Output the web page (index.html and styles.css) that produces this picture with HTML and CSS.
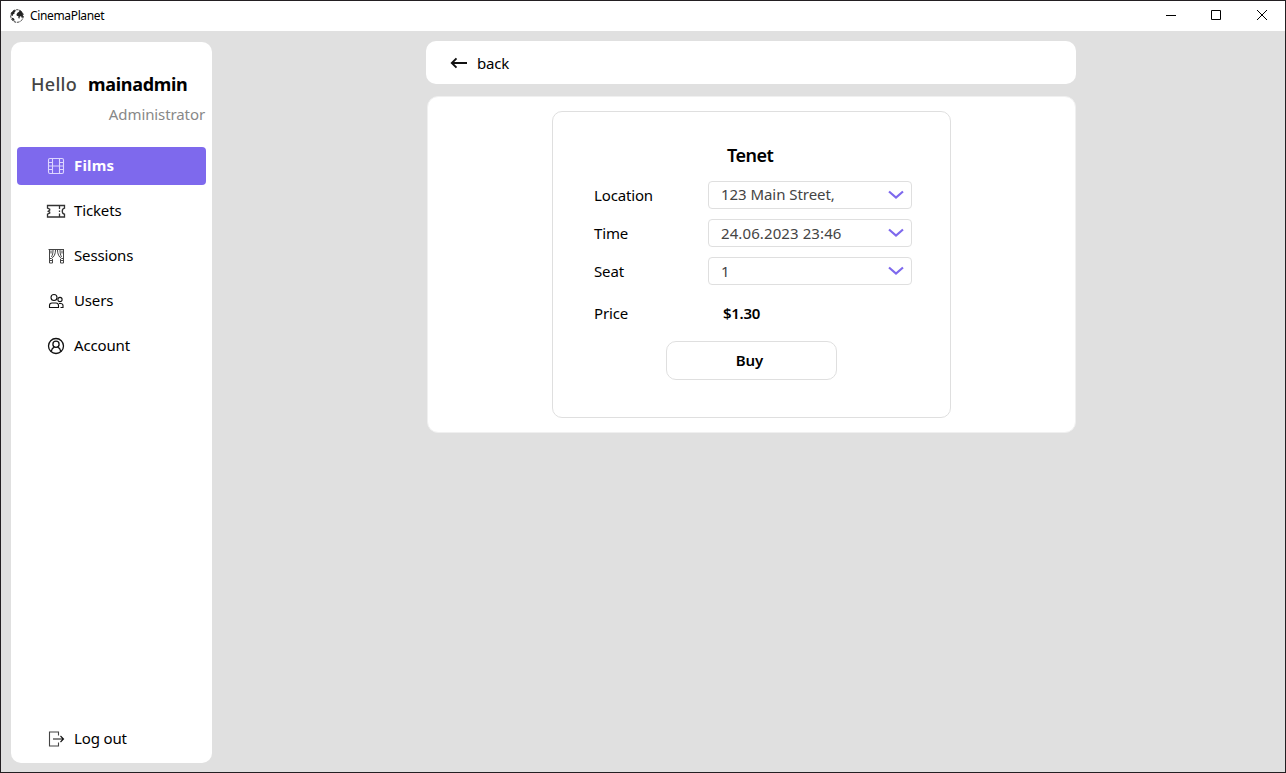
FILE: index.html
```html
<!DOCTYPE html>
<html lang="en">
<head>
<meta charset="utf-8">
<title>CinemaPlanet</title>
<link rel="stylesheet" href="styles.css">
</head>
<body>
<div class="window">
  <header class="titlebar">
    <svg class="logo" width="14" height="14" viewBox="0 0 14 14"><circle cx="7" cy="7" r="6.300" fill="#fff" stroke="#333" stroke-width="1" stroke-dasharray="2.500 1"/><path fill="#222" d="M1.200 4 3 1.800 5.500 1 5.800 2 4.500 3.200 4.600 4.500 3 5.400 2.700 7 1.200 6.500zM7.500 3.800 9.300 2.600 9 1.300 11.200 2 12.800 4.500 13 7.500 12 9.500 11.300 7.500 10 7.300 9.300 9.800 8.300 9 8.500 7.200 6.800 6.800 6.500 5.300zM1.500 8.500 3.700 9.200 4.500 10.500 4.200 12 2.500 11z"/></svg>
    <span class="app-name">CinemaPlanet</span>
    <svg class="controls" width="104" height="14" viewBox="0 0 104 14" fill="none" stroke="#000"><path d="M1 7.500h10M46.500 2.500h9v9h-9zM92 2l10 10M102 2 92 12"/></svg>
  </header>
  <div class="body">
    <aside class="sidebar">
      <div class="greeting"><span class="hello">Hello</span><strong class="username">mainadmin</strong></div>
      <div class="role">Administrator</div>
      <nav class="menu">
        <a class="item active"><svg class="icon" viewBox="0 0 20 20"><rect x="2.500" y="2.500" width="15" height="15" rx="1.500"/><path d="M6.500 2.500v15M13.500 2.500v15M6.500 10h7M2.500 6.500h4M2.500 10h4M2.500 13.500h4M13.500 6.500h4M13.500 10h4M13.500 13.500h4"/></svg><span class="label">Films</span></a>
        <a class="item"><svg class="icon" viewBox="0 0 20 20"><path stroke="#333" stroke-width="1.300" d="M1.500 4.500h17v2.700c-3 .8-3 5.300 0 6v2.800h-17v-2.800l2.200-1v-1l-1.500-1 1.500-1v-1l-2.200-1zM13.500 5v3M13.500 9.500v1.500M13.500 12.500v3"/></svg><span class="label">Tickets</span></a>
        <a class="item"><svg class="icon" viewBox="0 0 20 20"><path stroke="#444" stroke-width="1" d="M2.500 3.500h15M3.500 3v14h3v-4M17.500 3v14h-3v-4M9.500 4c0 4-1.500 7-4 8.500h-2M11.500 4c0 4 1.500 7 4 8.500h2M7 4c0 3-.5 5-1.500 7M14 4c0 3 .5 5 1.500 7M3.500 14.500h3M14.500 14.500h3M5 4.500v3M16 4.500v3"/></svg><span class="label">Sessions</span></a>
        <a class="item"><svg class="icon" viewBox="0 0 20 20"><circle cx="8" cy="6.500" r="3"/><circle cx="14" cy="8.500" r="2.100"/><path d="M3.500 16.500v-2q0-2.500 2.500-2.500h4q2.500 0 2.500 2.500v2zM13 12.500h1.500q2.500 0 2.500 2v2h-2.500"/></svg><span class="label">Users</span></a>
        <a class="item"><svg class="icon" viewBox="0 0 20 20"><g stroke-width="1.300"><circle cx="10" cy="10" r="7.500"/><circle cx="10" cy="8.300" r="3.100"/><path d="M5.200 15.300q.8-3.300 3.200-4.100M14.800 15.300q-.8-3.300-3.200-4.100"/></g></svg><span class="label">Account</span></a>
      </nav>
      <a class="item logout"><svg class="icon" viewBox="0 0 20 20"><path d="M12.500 6.500v-3.500h-9v14h9v-3.500" stroke="#444"/><path d="M7 10h10.500M14.500 7l3 3-3 3"/></svg><span class="label">Log out</span></a>
    </aside>
    <main class="content">
      <div class="back-bar">
        <svg width="18" height="14" viewBox="0 0 18 14" fill="none" stroke="#111" stroke-width="1.900"><path d="M17 7H2M6.500 2.300 1.800 7l4.700 4.700"/></svg>
        <span class="back">back</span>
      </div>
      <section class="panel">
        <div class="card">
          <h1 class="film-title">Tenet</h1>
          <div class="row"><label class="name">Location</label><div class="select"><span class="value location">123 Main Street,</span><svg class="chevron" viewBox="0 0 16 10"><path d="m1 1.500 7 6 7-6"/></svg></div></div>
          <div class="row"><label class="name">Time</label><div class="select"><span class="value time">24.06.2023 23:46</span><svg class="chevron" viewBox="0 0 16 10"><path d="m1 1.500 7 6 7-6"/></svg></div></div>
          <div class="row"><label class="name">Seat</label><div class="select"><span class="value">1</span><svg class="chevron" viewBox="0 0 16 10"><path d="m1 1.500 7 6 7-6"/></svg></div></div>
          <div class="row price-row"><span class="name">Price</span><strong class="price">$1.30</strong></div>
          <button class="buy">Buy</button>
        </div>
      </section>
    </main>
  </div>
</div>
</body>
</html>
```
FILE: styles.css
```css
* { box-sizing: border-box; }
body { margin: 0; font-family: "Noto Sans", "Open Sans", sans-serif; font-size: 15px; line-height: 20px; color: #000; }
span, label, strong { white-space: nowrap; }
.window { width: 1286px; height: 773px; border: 1px solid #231f22; background: #e0e0e0; display: flex; flex-direction: column; }
.titlebar { height: 30px; background: #fff; display: flex; align-items: center; padding: 0 16px 0 9px; }
.app-name { margin-left: 6px; font-size: 12px; letter-spacing: -0.35px; }
.controls { margin-left: auto; transform: translateY(-1px); }
.body { flex: 1; display: flex; padding: 11px 10px 9px; }
.sidebar { width: 201px; background: #fff; border-radius: 10px; padding: 28px 6px 5px; display: flex; flex-direction: column; }
.greeting { height: 28px; display: flex; align-items: center; padding-left: 14px; font-size: 18px; }
.hello { width: 57px; color: #444; letter-spacing: 0.3px; font-weight: 500; }
.username { font-weight: 700; letter-spacing: -0.3px; }
.role { height: 35px; padding: 6px 1px 0 0; text-align: right; color: #888; letter-spacing: -0.1px; }
.menu { margin-top: 14px; display: flex; flex-direction: column; gap: 7px; }
.item { height: 38px; display: flex; align-items: center; gap: 8px; padding-left: 29px; border-radius: 4px; }
.label { padding-bottom: 2px; letter-spacing: -0.15px; }
.active .label { letter-spacing: 0.15px; }
.icon { width: 20px; height: 20px; fill: none; stroke: #111; stroke-width: 1.1; }
.active { background: #7e69ed; color: #fff; font-weight: 700; }
.active .icon { stroke: #ddd6ff; stroke-width: 1.1; }
.logout { margin-top: auto; }
.content { width: 649px; margin-left: 215px; display: flex; flex-direction: column; gap: 12px; }
.back-bar { height: 43px; margin: -1px 0 0 -1px; background: #fff; border-radius: 10px; display: flex; align-items: center; padding-left: 24px; gap: 9px; }
.back { letter-spacing: -0.2px; }
.panel { height: 337px; background: #fff; border: 1px solid #f0f0f0; border-radius: 11px; display: flex; justify-content: center; align-items: flex-start; padding-top: 14px; }
.card { width: 399px; height: 307px; border: 1px solid #dfdfdf; border-radius: 10px; padding: 32px 38px 0 41px; display: flex; flex-direction: column; gap: 10px; }
.film-title { margin: 0 0 5px; height: 22px; padding-left: 133px; font-size: 18px; font-weight: 600; line-height: 22px; letter-spacing: -0.5px; }
.row { height: 28px; display: flex; align-items: center; }
.name { width: 114px; letter-spacing: -0.15px; }
.select { width: 204px; height: 28px; border: 1px solid #dfdfdf; border-radius: 4px; display: flex; align-items: center; justify-content: space-between; padding: 0 7px 0 12px; color: #444; }
.location { padding-bottom: 3px; letter-spacing: -0.05px; }
.time { letter-spacing: 0.1px; }
.chevron { width: 16px; height: 10px; fill: none; stroke: #7e69ed; stroke-width: 2.2; }
.price-row { margin-top: 4px; }
.price { padding-left: 15px; font-weight: 600; letter-spacing: -0.3px; }
.buy { width: 171px; height: 39px; margin: 4px 0 0 72px; padding: 0 4px 2px 0; border: 1px solid #dfdfdf; border-radius: 10px; background: #fff; font: 600 15px "Noto Sans", "Open Sans", sans-serif; color: #000; }
```
